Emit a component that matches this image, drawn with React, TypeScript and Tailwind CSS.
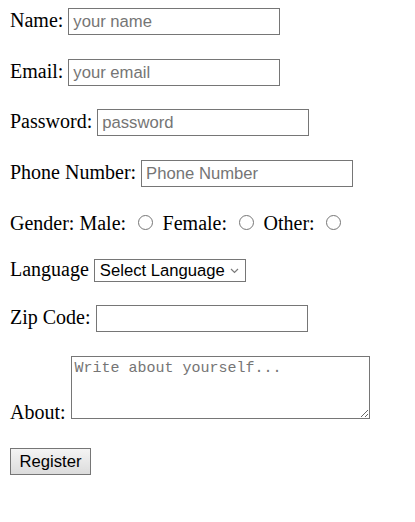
import React from "react";

const serif = "font-['Liberation_Serif','Times_New_Roman',serif] text-[20px] leading-[23px] text-black";
const inputCls =
  "w-[212px] h-[27px] border border-[#767676] bg-white pl-[4px] pr-[3px] text-[16.67px] font-['Liberation_Sans',Arial,sans-serif] text-black placeholder:text-[#757575] outline-none";

function Radio({ name }: { name: string }) {
  return (
    <input
      type="radio"
      name={name}
      className="appearance-none inline-block w-[15px] h-[15px] rounded-full border-[1.5px] border-[#767676] bg-white ml-[6.5px] mr-[5px] align-baseline"
    />
  );
}

export default function App() {
  return (
    <div className={`pl-[10px] pt-[8px] bg-white min-h-[522px] ${serif}`}>
      <div className="flex items-baseline gap-[5px]">
        <span>Name:</span>
        <input className={inputCls} placeholder="your name" />
      </div>
      <div className="flex items-baseline gap-[5px] mt-[24px]">
        <span>Email:</span>
        <input className={inputCls} placeholder="your email" />
      </div>
      <div className="flex items-baseline gap-[5px] mt-[23px]">
        <span>Password:</span>
        <input type="password" className={inputCls} placeholder="password" />
      </div>
      <div className="flex items-baseline gap-[5px] mt-[24px]">
        <span>Phone Number:</span>
        <input className={inputCls} placeholder="Phone Number" />
      </div>
      <div className="mt-[25px] whitespace-pre">
        {"Gender: Male: "}
        <Radio name="g" />
        {" Female: "}
        <Radio name="g" />
        {" Other: "}
        <Radio name="g" />
      </div>
      <div className="flex items-baseline gap-[5px] mt-[23px]">
        <span>Language</span>
        <div className="w-[152px] h-[23px] border border-[#767676] bg-white flex items-center pl-[5px] pr-[6px] text-[16.67px] font-['Liberation_Sans',Arial,sans-serif] text-black">
          <span className="flex-1 leading-[19px]">Select Language</span>
          <svg width="9" height="6" viewBox="0 0 9 6" className="mt-[1px]">
            <path d="M1 1 L4.5 4.5 L8 1" fill="none" stroke="#7a7a7a" strokeWidth="1.2" />
          </svg>
        </div>
      </div>
      <div className="flex items-baseline gap-[5px] mt-[23px]">
        <span>Zip Code:</span>
        <input className={inputCls} />
      </div>
      <div className="flex items-end gap-[5px] mt-[24px]">
        <span className="leading-[20px] mb-[-3px]">About:</span>
        <textarea
          className="w-[299px] h-[63px] border border-[#767676] bg-white px-[3px] pt-[3px] text-[15px] leading-[18px] font-['Liberation_Mono','Courier_New',monospace] text-black placeholder:text-[#757575] outline-none block"
          placeholder="Write about yourself..."
        />
      </div>
      <div className="mt-[29px]">
        <button className="w-[81px] h-[27px] border border-[#767676] bg-gradient-to-b from-[#f4f4f4] to-[#dcdcdc] text-[16.67px] font-['Liberation_Sans',Arial,sans-serif] text-black">
          Register
        </button>
      </div>
    </div>
  );
}
